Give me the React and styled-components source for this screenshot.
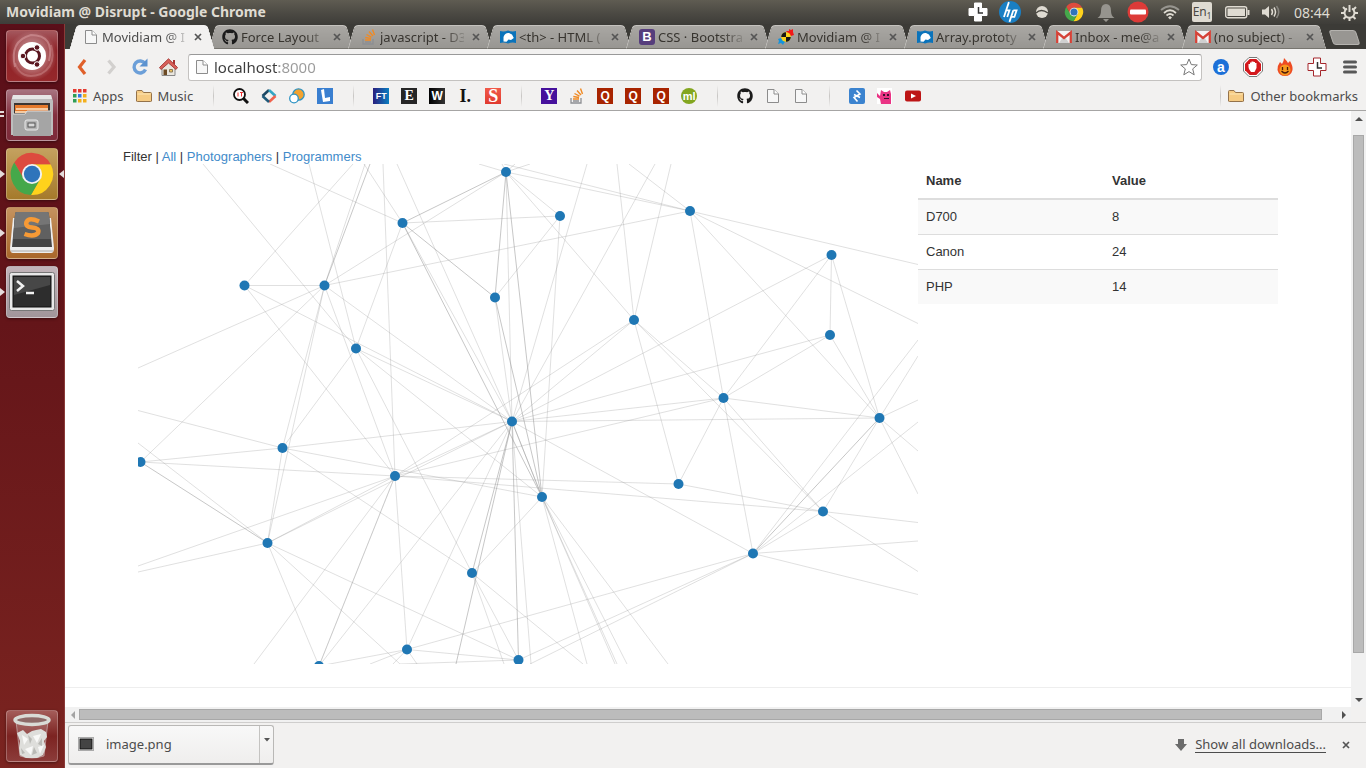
import React from "react";
import styled, { createGlobalStyle, css } from "styled-components";
import { FaGithub } from "react-icons/fa";

const uiFont = '"Noto Sans", "Open Sans", sans-serif';
const pageFont = '"Liberation Sans", Arial, sans-serif';

const GlobalStyle = createGlobalStyle`
  *, *::before, *::after { box-sizing: border-box; }
  body { margin: 0; background: #fff; }
  button { font: inherit; color: inherit; border: 0; padding: 0; background: none; }
  a { color: inherit; text-decoration: none; }
  svg { display: block; flex: none; }
`;

/* ---------- desktop shell ---------- */

const Desktop = styled.div`
  display: flex;
  flex-direction: column;
  min-height: 100vh;
  font-family: ${uiFont};
  font-size: 13px;
`;

const TopPanel = styled.header`
  display: flex;
  align-items: center;
  justify-content: space-between;
  height: 24px;
  padding: 0 6px;
  background: linear-gradient(#5f5c52, #4a4842 60%, #3e3d39);
  color: #dfdbd2;
  font-size: 14px;
`;

const WindowTitle = styled.h1`
  margin: 0;
  font-size: 14px;
  line-height: 24px;
  font-weight: 700;
`;

const Indicators = styled.div`
  display: flex;
  align-items: center;
`;

const Indicator = styled.button`
  display: flex;
  align-items: center;
  justify-content: center;
  width: ${(p) => p.$width || 32}px;
  height: 24px;
`;

const Language = styled.span`
  width: 20px;
  height: 20px;
  border-radius: 2px;
  background: #dfdbd2;
  color: #4a4842;
  font-size: 12px;
  line-height: 20px;
  sub {
    font-size: 8px;
    line-height: 8px;
  }
`;

const Workspace = styled.div`
  display: flex;
  flex: 1;
`;

const Launcher = styled.nav`
  display: flex;
  flex-direction: column;
  gap: 7px;
  flex: 0 0 65px;
  padding: 6px 0;
  border-right: 1px solid #8a3a38;
  background: linear-gradient(#5a0f19, #641519 40%, #7b2420);
`;

const LauncherItem = styled.button`
  position: relative;
  display: flex;
  align-items: center;
  justify-content: center;
  width: 52px;
  height: 52px;
  margin-left: 6px;
  border-radius: 4px;
  border: 1px solid rgba(255, 255, 255, 0.25);
  background: ${(p) => p.$tint};
  box-shadow: 0 1px 3px rgba(0, 0, 0, 0.4);
  ${(p) => p.$last && css`margin-top: auto;`}
  ${(p) =>
    p.$running &&
    css`
      &::before {
        content: "";
        position: absolute;
        left: -7px;
        top: 21px;
        border: 4px solid transparent;
        border-left: 5px solid #e4dcdc;
        border-right: 0;
      }
    `}
  ${(p) =>
    p.$pair &&
    css`
      &::before {
        content: "";
        position: absolute;
        left: -7px;
        top: 21px;
        width: 4px;
        height: 6px;
        border: solid #e4dcdc;
        border-width: 2px 0;
      }
    `}
  ${(p) =>
    p.$focused &&
    css`
      &::after {
        content: "";
        position: absolute;
        right: -7px;
        top: 21px;
        border: 4px solid transparent;
        border-right: 5px solid #e4dcdc;
        border-left: 0;
      }
    `}
`;

/* ---------- browser ---------- */

const Browser = styled.div`
  display: flex;
  flex-direction: column;
  flex: 1;
  min-width: 0;
  background: #f2f1f0;
`;

const TabStrip = styled.ul`
  display: flex;
  height: 25px;
  margin: 0;
  padding: 0 0 0 6px;
  list-style: none;
  background: #3c3b37;
`;

const Tab = styled.li`
  position: relative;
  display: flex;
  align-items: center;
  flex: 0 1 139px;
  min-width: 0;
  padding: 0 4px 0 12px;
  z-index: ${(p) => (p.$active ? 2 : 1)};
  color: ${(p) => (p.$active ? "#4c4c4c" : "#37342f")};
  &::before,
  &::after {
    content: "";
    position: absolute;
    z-index: -1;
    top: 1px;
    bottom: 0;
    width: 60%;
    border: 1px solid ${(p) => (p.$active ? "#f2f1f0" : "#c4c2be")};
    border-bottom-color: ${(p) => (p.$active ? "#f2f1f0" : "#77756f")};
    background: ${(p) => (p.$active ? "#f2f1f0" : "linear-gradient(#a9a7a3, #989692)")};
  }
  &::before {
    left: 2px;
    border-right: 0;
    border-radius: 4px 0 0 0;
    transform: skewX(-16deg);
  }
  &::after {
    right: -1px;
    border-left: 0;
    border-radius: 0 4px 0 0;
    transform: skewX(16deg);
  }
`;

const TabButton = styled.button`
  display: flex;
  align-items: center;
  gap: 3px;
  flex: 1;
  min-width: 0;
  text-align: left;
`;

const TabLabel = styled.span`
  flex: 1;
  min-width: 0;
  white-space: nowrap;
  line-height: 24px;
  mask-image: linear-gradient(to right, #000 76%, rgba(0, 0, 0, 0.2));
`;

const CloseButton = styled.button`
  display: flex;
  align-items: center;
  justify-content: center;
  flex: none;
  width: 16px;
  height: 16px;
  margin-left: 4px;
`;

const NewTab = styled.button`
  width: 27px;
  height: 15px;
  margin: 6px 0 0 9px;
  border: 1px solid #b5b3af;
  border-radius: 3px;
  background: #989692;
  transform: skewX(18deg);
`;

const Toolbar = styled.div`
  display: flex;
  align-items: center;
  height: 36px;
  padding: 0 0 0 2px;
`;

const ToolButton = styled.button`
  display: flex;
  align-items: center;
  justify-content: center;
  width: ${(p) => p.$width || 29}px;
  height: 24px;
`;

const Omnibox = styled.label`
  display: flex;
  align-items: center;
  flex: 1;
  height: 27px;
  margin: 0 3px 0 5px;
  padding: 0 3px 0 5px;
  gap: 4px;
  border: 1px solid #c4c2c0;
  border-top-color: #999;
  border-radius: 3px;
  background: #fff;
`;

const Address = styled.input`
  flex: 1;
  min-width: 0;
  padding: 0;
  border: 0;
  outline: 0;
  font: 15px/24px ${uiFont};
  color: #222;
  background: linear-gradient(to right, #3c3c3c 65px, #9a9a9a 65px);
  background-clip: text;
  -webkit-text-fill-color: transparent;
`;

const BookmarksBar = styled.nav`
  display: flex;
  align-items: center;
  gap: 12px;
  height: 26px;
  padding: 0 8px 4px 8px;
  border-bottom: 1px solid #a6a5a4;
  color: #4c4c4c;
`;

const Bookmark = styled.a`
  display: flex;
  align-items: center;
  gap: 6px;
  white-space: nowrap;
  margin-left: ${(p) => (p.$end ? "-12px" : "0")};
`;

const Divider = styled.span`
  width: 16px;
  height: 22px;
  background: linear-gradient(#f2f1f0, #c8c6c4, #f2f1f0) center / 1px 100% no-repeat;
  margin-left: ${(p) => (p.$end ? "auto" : "0")};
`;

const Badge = styled.span`
  flex: none;
  width: 16px;
  height: 16px;
  border-radius: ${(p) => p.$radius || 0}px;
  background: ${(p) => p.$bg};
  color: ${(p) => p.$fg || "#fff"};
  font: 700 ${(p) => p.$size || 13}px/16px ${(p) => p.$font || pageFont};
  text-align: center;
`;

const Viewport = styled.div`
  display: grid;
  grid-template-columns: 1fr 15px;
  grid-template-rows: 1fr 15px;
  flex: 1;
`;

const Page = styled.main`
  padding-top: 39px;
  background: #fff;
  color: #333;
  font: 13px/18px ${pageFont};
`;

const Filter = styled.nav`
  padding: 0 58px;
  line-height: 14px;
  a { color: #428bca; }
`;

const Columns = styled.div`
  display: grid;
  grid-template-columns: 780fr 360fr;
  align-items: start;
  padding: 0 73px;
`;

const Graph = styled.svg`
  width: 100%;
  height: auto;
  overflow: hidden;
`;

const DataTable = styled.table`
  width: 100%;
  border-collapse: collapse;
  table-layout: fixed;
  th, td {
    padding: 8px;
    text-align: left;
  }
  th:first-child { width: 186px; }
  th { border-bottom: 2px solid #ddd; }
  td { border-top: 1px solid #ddd; }
  tbody tr:nth-child(odd) { background: #f9f9f9; }
`;

const Rule = styled.hr`
  margin: 23px 0 0;
  border: 0;
  border-top: 1px solid #eee;
`;

const ScrollBar = styled.div`
  display: flex;
  flex-direction: ${(p) => (p.$vertical ? "column" : "row")};
  align-items: center;
  gap: ${(p) => (p.$vertical ? "12px" : "2px")};
  padding: ${(p) => (p.$vertical ? "4px 0 3px" : "0 3px 0 4px")};
  background: #f1f1f1;
`;

const ScrollThumb = styled.div`
  flex: 1;
  border: 1px solid #a8a8a8;
  background: #bcbcbc;
  ${(p) =>
    p.$vertical
      ? css`width: 11px; margin-bottom: 31px;`
      : css`height: 11px; margin-right: 16px;`}
`;

const DownloadShelf = styled.footer`
  display: flex;
  align-items: center;
  justify-content: space-between;
  height: 46px;
  padding: 0 12px 2px 3px;
  border-top: 1px solid #cfcecd;
  color: #4c4c4c;
`;

const DownloadItem = styled.div`
  display: flex;
  width: 206px;
  height: 40px;
  border: 1px solid #b9b8b6;
  border-bottom: 2px solid #999;
  border-radius: 3px;
  background: linear-gradient(#f8f8f8, #efeeed);
`;

const DownloadName = styled.button`
  display: flex;
  align-items: center;
  gap: 12px;
  flex: 1;
  padding-left: 9px;
  border-right: 1px solid #c4c3c1;
`;

const DownloadMenu = styled.button`
  display: flex;
  justify-content: center;
  width: 13px;
  padding-top: 12px;
`;

const ShelfActions = styled.div`
  display: flex;
  align-items: center;
  gap: 8px;
  a {
    border-bottom: 1px solid #4c4c4c;
    line-height: 16px;
  }
`;

/* ---------- icons ---------- */

const ChromeIcon = ({ size = 18 }) => (
  <svg width={size} height={size} viewBox="0 0 48 48">
    <path d="M5.5 12A22 22 0 0 1 43.6 14H24L15.3 29Z" fill="#dd4b3e" />
    <path d="M43.6 14A22 22 0 0 1 22.9 46L32.7 29 24 14Z" fill="#ffd21c" />
    <path d="M22.9 46A22 22 0 0 1 5.5 12L15.3 29H32.7Z" fill="#45a84a" />
    <circle cx="24" cy="24" r="10.5" fill="#f2f2f2" />
    <circle cx="24" cy="24" r="8.5" fill="#2f74bb" />
  </svg>
);

const PageIcon = () => (
  <svg width="16" height="16" viewBox="0 0 16 16">
    <path d="M2.500 1.500H9L13.500 6V14.500H2.500Z" fill="#f7f7f7" stroke="#8c8c8c" />
    <path d="M9 1.500V6H13.500" fill="#fff" stroke="#8c8c8c" />
  </svg>
);

const FolderIcon = () => (
  <svg width="16" height="16" viewBox="0 0 16 16">
    <path d="M.5 13V3.500Q.5 2.500 1.500 2.500H6L7.500 4.500H14.500Q15.500 4.500 15.500 5.500V13Q15.500 13.500 14.500 13.500H1.500Q.5 13.500.5 13Z" fill="#f6cb83" stroke="#94724a" />
    <path d="M1.500 6H14.500" stroke="#fde6b5" />
  </svg>
);

const CloseIcon = () => (
  <svg width="8" height="8" viewBox="0 0 8 8">
    <path d="M1 1 7 7M7 1 1 7" stroke="#555" strokeWidth="1.700" />
  </svg>
);

const GmailIcon = () => (
  <svg width="16" height="16" viewBox="0 0 16 16">
    <rect y="2" width="16" height="12" rx="1" fill="#f3f3f3" />
    <path d="M3 14 7 8H9L13 14Z" fill="#d0d0d0" />
    <path d="M1.200 14V3.500L8 9 14.800 3.500V14" fill="none" stroke="#d54237" strokeWidth="2.300" />
  </svg>
);

const MdnIcon = () => (
  <svg width="16" height="16" viewBox="0 0 16 16">
    <path d="M0 2Q4 3 8 1.500 12 3 16 2V14Q12 13 8 14.500 4 13 0 14Z" fill="#0a73bb" />
    <path d="M3.500 12.500 3.500 8Q5 3.500 9 4L12 5.500 13.800 9 11 11 8.500 10.500 6.500 12.800Z" fill="#fff" />
  </svg>
);

const MovidiamIcon = () => (
  <svg width="16" height="16" viewBox="0 0 16 16">
    <path d="M8 2H11V0L13 1 15 0V3L16 6 13 7 11 6Z" fill="#f11818" />
    <path d="M0 10 3 9 5 11 8 12 6 14 5 16 3 14 0 15 1 12Z" fill="#1493dc" />
    <circle cx="8" cy="8" r="4.800" fill="#f8d11c" />
    <path d="M8 8V3.200A4.800 4.800 0 0 0 3.200 8ZM8 8V12.800A4.800 4.800 0 0 0 12.800 8Z" fill="#171717" />
  </svg>
);

const StackIcon = () => (
  <svg width="16" height="16" viewBox="0 0 16 16" fill="none">
    <path d="M2 10V15H12V10M4 13H10" stroke="#8d8f92" strokeWidth="1.300" />
    <path d="M4 11H10M4.300 8.500 10 9.500M5.500 5.500 10.500 8.200M8 2.500 12 7M11.500.5 13.500 6" stroke="#f08a24" strokeWidth="1.400" />
  </svg>
);

const ArrowIcon = ({ dir, fill = "#505050" }) => {
  const shapes = {
    up: "M0 6 4 2 8 6Z",
    down: "M0 2 4 6 8 2Z",
    left: "M6 0 2 4 6 8Z",
    right: "M2 0 6 4 2 8Z",
  };
  return (
    <svg width="8" height="8" viewBox="0 0 8 8">
      <path d={shapes[dir]} fill={fill} />
    </svg>
  );
};

const ClockCross = ({ fill = "#fff", stroke = "#fff", hand = "#333" }) => (
  <svg width="20" height="20" viewBox="0 0 20 20">
    <path d="M6.500 1H13.500V6.500H19V13.500H13.500V19H6.500V13.500H1V6.500H6.500Z" fill={fill} stroke={stroke} />
    <path d="M10.500 5V11H15" fill="none" stroke={hand} strokeWidth="1.500" />
  </svg>
);

/* ---------- launcher artwork ---------- */

const UbuntuArt = () => (
  <svg width="50" height="50" viewBox="0 0 50 50">
    <defs>
      <radialGradient id="swirl">
        <stop offset="0.500" stopColor="#fff" stopOpacity="0.350" />
        <stop offset="1" stopColor="#fff" stopOpacity="0" />
      </radialGradient>
    </defs>
    <circle cx="25" cy="25" r="25" fill="url(#swirl)" />
    <path d="M8 36Q2 10 24 4 48 4 42 30" fill="none" stroke="#d69a9c" strokeOpacity=".6" strokeWidth="2" />
    <path d="M44 14Q50 34 34 43 14 50 8 32" fill="none" stroke="#d69a9c" strokeOpacity=".4" strokeWidth="2" />
    <circle cx="25" cy="25" r="14" fill="#fff" />
    <circle cx="25.500" cy="25" r="7" fill="none" stroke="#5a1620" strokeWidth="3" />
    <g fill="#5a1620" stroke="#fff" strokeWidth="1">
      <circle cx="16" cy="25" r="2.800" />
      <circle cx="30" cy="16.500" r="2.800" />
      <circle cx="30" cy="33.500" r="2.800" />
    </g>
  </svg>
);

const FilesArt = () => (
  <svg width="44" height="46" viewBox="0 0 44 46">
    <path d="M3 3H41L43 9V43H1V9Z" fill="#bdbdbd" />
    <path d="M3 3H41L42 7H2Z" fill="#e6e6e6" />
    <rect x="4" y="11" width="36" height="12" fill="#3c3632" />
    <rect x="5" y="13" width="33" height="8" fill="#e57a2c" />
    <path d="M6 17H38M5 20H39" stroke="#fbe6c8" strokeWidth="1.500" />
    <path d="M3 22H15L17 19H41V44H3Z" fill="#a5a5a5" />
    <path d="M3 22H15L17 19H41" fill="none" stroke="#dedede" />
    <rect x="15" y="28" width="13" height="10" rx="2" fill="#b5b5b5" stroke="#e8e8e8" />
    <rect x="18" y="31" width="7" height="4" fill="#d8d8d8" stroke="#555" />
  </svg>
);

const SublimeArt = () => (
  <svg width="46" height="46" viewBox="0 0 46 46">
    <path d="M4 8 1 38Q1 43 4 43H42Q45 43 45 38L42 8Z" fill="#ededed" />
    <path d="M2 41H44" stroke="#aaa" />
    <path d="M6 5Q6 2 8 2H38Q40 2 40 5L43 37H3Z" fill="#444" />
    <path d="M6 5Q6 2 8 2H38Q40 2 40 5L42 29H4Z" fill="#606060" />
    <path d="M6 5Q6 2 8 2H38Q40 2 40 5L41 14 5 18Z" fill="#757575" />
    <path d="M30 11.500Q20 7 17.500 12 16 17 23 17.500 31 18 29 23 25 27.500 15.500 24" fill="none" stroke="#f79a35" strokeWidth="4.500" />
  </svg>
);

const TerminalArt = () => (
  <svg width="46" height="40" viewBox="0 0 46 40">
    <rect x=".5" y=".5" width="45" height="38" rx="2" fill="#e8e8e8" stroke="#777" />
    <rect x="4" y="4" width="38" height="31" fill="#2d2d2d" stroke="#111" />
    <path d="M5 5H41V13L5 23Z" fill="#474747" />
    <path d="M8 9 14 14 8 19M17 21H25" fill="none" stroke="#f2f2f2" strokeWidth="2.500" />
  </svg>
);

const TrashArt = () => (
  <svg width="42" height="48" viewBox="0 0 42 48">
    <path d="M5 9 9 44Q21 48 33 44L37 9Z" fill="#fff" fillOpacity=".18" stroke="#ddd" strokeOpacity=".5" />
    <path d="M6 21 12 18 16 22 21 19 25 18 30 17 35 20 36 25 33 29 35 35 32 43 26 46H15L9 43 8 36 9 29Z" fill="#dededb" />
    <path d="M11 23 17 27 13 33ZM22 24 30 22 26 31ZM14 37 22 34 20 43ZM27 35 33 33 29 42Z" fill="#f8f8f7" />
    <path d="M17 23 21 27 19 32ZM31 26 27 32 31 34ZM10 36 14 41 11 42ZM23 35 26 41 21 43Z" fill="#b9b9b5" />
    <ellipse cx="21" cy="8" rx="17" ry="4.500" fill="#8e6a68" stroke="#d9dbd6" strokeWidth="3.500" />
  </svg>
);

/* ---------- graph data ---------- */

const nodes = {
  A: [368, 8], B: [264.5, 59], C: [422, 52], D: [552, 47], E: [693.5, 91],
  F: [106.5, 121.5], G: [186.5, 121.5], H: [357, 133.5], I: [496, 156], J: [692, 171],
  K: [218, 184.5], L: [585.5, 234], M: [374, 257.5], N: [741.5, 254], O: [144.5, 284],
  P: [2.5, 298], Q: [257, 312], R: [540.5, 320], S: [404, 333], T: [685, 347.5],
  U: [129.5, 379], V: [615, 389.5], W: [334, 409], X: [269, 485.5], Y: [380.5, 496], Z: [181, 502],
};

const links =
  "AG AM AC AI AD BC BK BM GD GF GM GO GU GP GQ FM FQ KM KO KS KW HC HM CS IR IM IQ IL IT " +
  "EM EL EJ EN JM JL JN LM LQ LN LR LT LV DL DN NM NT TV TR TQ VM VX VY OM OS OP OU OW QM QU QR QP QX QZ QZ " +
  "MU MX MZ MS SW UZ UY WY XZ XY";

const strongLinks = "AB AH AS BH BS HS MW MS MY NV PU";

/* links whose far end lies outside the canvas: node, x, y, strong */
const outgoing = [
  ["K", 65, 0], ["B", 132, 0], ["K", 171, 0], ["F", 215, 0], ["G", 227, 0], ["G", 232, 0, 1], ["B", 226, 0],
  ["Q", 245, 0], ["M", 259, 0], ["A", 341, 0], ["A", 364, 0], ["D", 366, 0], ["A", 377, 0], ["A", 392, 0],
  ["M", 449, 0], ["I", 479, 0], ["M", 517, 0], ["I", 533, 0], ["D", 491, 0], ["D", 780, 100.5], ["D", 780, 159.5],
  ["V", 780, 176], ["N", 780, 192], ["N", 780, 236], ["V", 780, 258], ["N", 780, 287], ["N", 780, 330],
  ["T", 780, 358.5], ["V", 780, 377], ["T", 780, 407.5], ["V", 780, 430.5], ["V", 392, 500],
  ["G", 0, 204], ["O", 0, 246.5], ["U", 0, 279], ["Q", 0, 402], ["U", 0, 408], ["Q", 116, 500],
  ["U", 262, 500], ["Y", 262, 500], ["M", 318, 500, 1], ["M", 393, 500], ["W", 366, 500], ["W", 445, 500],
  ["S", 449, 500], ["S", 477, 500], ["S", 479, 500], ["S", 489, 500], ["S", 530, 500],
  ["X", 232, 500], ["X", 255, 500], ["X", 279, 500],
];

const pairs = (list) => list.split(" ").map(([from, to]) => [nodes[from], nodes[to]]);

const segments = [
  ...pairs(links).map(([a, b]) => [a, b, false]),
  ...pairs(strongLinks).map(([a, b]) => [a, b, true]),
  ...outgoing.map(([from, x, y, strong]) => [nodes[from], [x, y], Boolean(strong)]),
];

const rows = [
  ["D700", 8],
  ["Canon", 24],
  ["PHP", 14],
];

const tabs = [
  { label: "Movidiam @ I", icon: <PageIcon />, active: true },
  { label: "Force Layout", icon: <FaGithub size={16} color="#1b1b1b" /> },
  { label: "javascript - D3", icon: <StackIcon /> },
  { label: "<th> - HTML (", icon: <MdnIcon /> },
  { label: "CSS · Bootstra", icon: <Badge $bg="#563d7c" $radius={3}>B</Badge> },
  { label: "Movidiam @ I", icon: <MovidiamIcon /> },
  { label: "Array.prototy", icon: <MdnIcon /> },
  { label: "Inbox - me@a", icon: <GmailIcon /> },
  { label: "(no subject) -", icon: <GmailIcon /> },
];

const serif = '"Liberation Serif", serif';

const favicons = [
  null,
  ["IT search", <svg width="16" height="16" viewBox="0 0 16 16"><circle cx="6.500" cy="6.500" r="5.500" fill="#fff" stroke="#111" strokeWidth="1.800" /><path d="M10.500 10.500 15 15" stroke="#111" strokeWidth="3" /><path d="M5 4.500V8.500M7 4.500H10M8.500 4.500V8.500" stroke="#e33" /></svg>],
  ["Diamond", <svg width="16" height="16" viewBox="0 0 16 16" fill="none" strokeWidth="2.600"><path d="M1.500 8 8 2" stroke="#1b4763" /><path d="M8 2 14.500 8" stroke="#33a5c4" /><path d="M14.500 8 8 14" stroke="#f0624d" /><path d="M8 14 1.500 8" stroke="#1f5a7a" /></svg>],
  ["Circles", <svg width="16" height="16" viewBox="0 0 16 16"><circle cx="9.500" cy="6.500" r="5.700" fill="#f4a32f" stroke="#2f94c4" strokeWidth="1.300" /><circle cx="5" cy="10.500" r="4.300" fill="#fff" stroke="#2f94c4" strokeWidth="1.300" /></svg>],
  ["Lanyrd", <svg width="16" height="16" viewBox="0 0 16 16"><rect width="16" height="16" fill="#3a7fd0" /><path d="M4 2 7 1 8 10 13 9V13L6 14Z" fill="#fff" /></svg>],
  null,
  ["FT Labs", <Badge $bg="linear-gradient(90deg,#2a1f7e,#0b7ec0)" $size={9}>FT</Badge>],
  ["Editorial", <Badge $bg="#262626" $font={serif} $size={14}>E</Badge>],
  ["Wired", <Badge $bg="linear-gradient(90deg,#000,#333)" $size={12}>W</Badge>],
  ["Instapaper", <Badge $bg="transparent" $fg="#111" $font={serif} $size={18}>I.</Badge>],
  ["Smashing Magazine", <Badge $bg="linear-gradient(#f15a4a,#e03a2f)" $font={serif} $size={18}>S</Badge>],
  null,
  ["Hacker News", <Badge $bg="#46119c" $font={serif} $size={14}>Y</Badge>],
  ["Stack Overflow", <StackIcon />],
  ["Quora", <Badge $bg="#a82400" $size={12}>Q</Badge>],
  ["Quora feed", <Badge $bg="#a82400" $size={12}>Q</Badge>],
  ["Quora topics", <Badge $bg="#a82400" $size={12}>Q</Badge>],
  ["ML", <Badge $bg="#83a61f" $radius={8} $size={11}>ml</Badge>],
  null,
  ["GitHub", <FaGithub size={16} color="#1b1b1b" />],
  ["Page one", <PageIcon />],
  ["Page two", <PageIcon />],
  null,
  ["Zerply", <svg width="16" height="16" viewBox="0 0 16 16"><rect width="16" height="16" rx="2" fill="#3b83cf" /><path d="M7.500 2.500 11 6 5 9.500 8.500 13.500M5 6.500 11 9.500" fill="none" stroke="#fff" strokeWidth="1.600" /></svg>],
  ["Monster", <svg width="16" height="16" viewBox="0 0 16 16"><rect width="15" height="16" fill="#fff" /><path d="M0 5 3 8 4 2 7 4H10L13 2 14 6V16H4L3 11 0 9Z" fill="#ea3384" /><path d="M6 6H8V8H6ZM10 6H12V8H10ZM7 10H12V11H7Z" fill="#3a1230" /></svg>],
  ["YouTube", <svg width="16" height="16" viewBox="0 0 16 16"><rect y="2.500" width="16" height="11" rx="2" fill="#bd1515" /><path d="M6 5.500V10.500L11 8Z" fill="#fff" /></svg>],
];

/* ---------- sections ---------- */

const StatusArea = () => (
  <Indicators>
    <Indicator aria-label="Time tracker"><ClockCross /></Indicator>
    <Indicator aria-label="HP">
      <svg width="22" height="22" viewBox="0 0 20 20">
        <circle cx="10" cy="10" r="10" fill="#1a7fc4" />
        <path d="M9 1 4.500 14.500M6.500 8.500H9.500L7.500 14.500M13 8.500 9.500 19M13 8.500H16L14 14.500H11" fill="none" stroke="#fff" strokeWidth="1.600" />
      </svg>
    </Indicator>
    <Indicator aria-label="Status">
      <svg width="14" height="14" viewBox="0 0 14 14"><circle cx="7" cy="7" r="6" fill="#dfdbd2" /><path d="M1 8Q6 3 13 8" fill="none" stroke="#4a4842" strokeWidth="1.500" /></svg>
    </Indicator>
    <Indicator aria-label="Chrome"><ChromeIcon size={20} /></Indicator>
    <Indicator aria-label="Notifications">
      <svg width="18" height="19" viewBox="0 0 18 19"><path d="M9 1Q14 1 14 8 14 13 17.500 15H.5Q4 13 4 8 4 1 9 1ZM6 16H12L9 19Z" fill="#96948e" /></svg>
    </Indicator>
    <Indicator aria-label="Do not disturb">
      <svg width="22" height="22" viewBox="0 0 22 22"><circle cx="11" cy="11" r="10.500" fill="#dd3b38" /><rect x="3" y="8.500" width="16" height="5" rx="1" fill="#fff" /></svg>
    </Indicator>
    <Indicator aria-label="Wireless">
      <svg width="20" height="16" viewBox="0 0 20 16" fill="none" strokeWidth="1.700"><path d="M1 6Q10-1.500 19 6" stroke="#97958f" /><path d="M4 9Q10 3.500 16 9" stroke="#dfdbd2" /><path d="M6.500 11.500Q10 8.500 13.500 11.500" stroke="#dfdbd2" /><path d="M8 13.500 10 15.500 12 13.500 10 12Z" fill="#dfdbd2" /></svg>
    </Indicator>
    <Indicator aria-label="Keyboard layout"><Language>En<sub>1</sub></Language></Indicator>
    <Indicator aria-label="Battery" $width={38}>
      <svg width="25" height="13" viewBox="0 0 25 13"><rect x=".7" y=".7" width="21" height="11" rx="2" fill="none" stroke="#dfdbd2" strokeWidth="1.400" /><rect x="2.500" y="2.500" width="17.500" height="7.500" fill="#dfdbd2" /><path d="M23.500 4V9" stroke="#dfdbd2" strokeWidth="2" /></svg>
    </Indicator>
    <Indicator aria-label="Volume" $width={30}>
      <svg width="20" height="16" viewBox="0 0 20 16" fill="none" stroke="#dfdbd2" strokeWidth="1.500"><path d="M1 5.500H4L8 2V14L4 10.500H1Z" fill="#dfdbd2" stroke="none" /><path d="M10.500 5Q12.500 8 10.500 11M13 3.500Q16 8 13 12.500" /><path d="M15.500 2Q20 8 15.500 14" stroke="#85837d" /></svg>
    </Indicator>
    <Indicator $width={52}>08:44</Indicator>
    <Indicator aria-label="Session" $width={22}>
      <svg width="17" height="17" viewBox="0 0 17 17" fill="none" stroke="#dfdbd2" strokeWidth="2"><path d="M6 4.500A5 5 0 1 0 11 4.500" /><path d="M8.500 1V8" /><path d="M2 3 4.500 5.500M15 3 12.500 5.500M0 9H3M17 9H14M2.500 15 5 12.500M14.500 15 12 12.500M8.500 17V14" /></svg>
    </Indicator>
  </Indicators>
);

const NetworkGraph = () => (
  <Graph viewBox="0 0 780 500" role="img" aria-label="Force layout graph">
    <g stroke="#999">
      {segments.map(([a, b, strong], i) => (
        <line key={i} x1={a[0]} y1={a[1]} x2={b[0]} y2={b[1]} strokeOpacity={strong ? 0.55 : 0.3} />
      ))}
    </g>
    <g fill="#1f77b4">
      {Object.entries(nodes).map(([id, [x, y]]) => (
        <circle key={id} cx={x} cy={y} r="5" />
      ))}
    </g>
  </Graph>
);

export default function App() {
  return (
    <Desktop>
      <GlobalStyle />
      <TopPanel>
        <WindowTitle>Movidiam @ Disrupt - Google Chrome</WindowTitle>
        <StatusArea />
      </TopPanel>
      <Workspace>
        <Launcher aria-label="Launcher">
          <LauncherItem aria-label="Dash" $tint="linear-gradient(#a4575d,#8e2126 40%,#96282b)"><UbuntuArt /></LauncherItem>
          <LauncherItem aria-label="Files" $pair $tint="linear-gradient(#a77480,#84303f 50%,#7d2b3a)"><FilesArt /></LauncherItem>
          <LauncherItem aria-label="Google Chrome" $running $focused $tint="linear-gradient(#c4a15f,#a57a2b)"><ChromeIcon size={46} /></LauncherItem>
          <LauncherItem aria-label="Sublime Text" $running $tint="linear-gradient(#c5935f,#a9672b)"><SublimeArt /></LauncherItem>
          <LauncherItem aria-label="Terminal" $running $tint="linear-gradient(#c2b5ba,#a1959a)"><TerminalArt /></LauncherItem>
          <LauncherItem aria-label="Trash" $last $tint="linear-gradient(#a45c59,#7c2321 50%,#8c3c3a)"><TrashArt /></LauncherItem>
        </Launcher>
        <Browser>
          <TabStrip>
            {tabs.map((tab, i) => (
              <Tab key={i} $active={tab.active}>
                <TabButton>
                  {tab.icon}
                  <TabLabel>{tab.label}</TabLabel>
                </TabButton>
                <CloseButton aria-label="Close tab"><CloseIcon /></CloseButton>
              </Tab>
            ))}
            <li><NewTab aria-label="New tab" /></li>
          </TabStrip>
          <Toolbar>
            <ToolButton aria-label="Back">
              <svg width="12" height="18" viewBox="0 0 12 18"><path d="M9 2 3.500 9 9 16" fill="none" stroke="#e0602a" strokeWidth="3.200" /></svg>
            </ToolButton>
            <ToolButton aria-label="Forward">
              <svg width="12" height="18" viewBox="0 0 12 18"><path d="M3.500 2.500 9 9 3.500 15.500" fill="none" stroke="#d2d0ce" strokeWidth="3.200" /></svg>
            </ToolButton>
            <ToolButton aria-label="Reload">
              <svg width="18" height="18" viewBox="0 0 18 18"><path d="M14 5.500A6 6 0 1 0 14.500 11.500" fill="none" stroke="#6c9fd8" strokeWidth="3.400" /><path d="M16.500.5V8.500H8.500Z" fill="#5c92cf" /></svg>
            </ToolButton>
            <ToolButton aria-label="Home">
              <svg width="19" height="19" viewBox="0 0 19 19"><path d="M14 2H16V8H14Z" fill="#a33" /><path d="M3 9V17.500H16V9L9.500 3Z" fill="#e9e6df" stroke="#888" /><path d="M4.500 11.500H8V17H4.500Z" fill="#6c4a24" /><path d="M10.500 11.500H13.500V14H10.500Z" fill="#f0c25a" stroke="#8a7a58" /><path d="M.5 9.500 9.500.8 18.500 9.500 17 11.500 9.500 5 2 11.500Z" fill="#d9605a" stroke="#a8403c" /></svg>
            </ToolButton>
            <Omnibox>
              <PageIcon />
              <Address aria-label="Address" defaultValue="localhost:8000" />
              <svg width="18" height="18" viewBox="0 0 18 18"><path d="M9 1 11.300 6.600 17.300 7 12.700 10.900 14.200 16.800 9 13.600 3.800 16.800 5.300 10.900.7 7 6.700 6.600Z" fill="#fff" stroke="#777" /></svg>
            </Omnibox>
            <ToolButton aria-label="Extension A" $width={32}><Badge $bg="#1c70d8" $radius={8} $size={14}>a</Badge></ToolButton>
            <ToolButton aria-label="Ad blocker" $width={32}>
              <svg width="20" height="20" viewBox="0 0 20 20"><path d="M6 .5H14L19.500 6V14L14 19.500H6L.5 14V6Z" fill="#fff" stroke="#777" /><path d="M6.700 2H13.300L18 6.700V13.300L13.300 18H6.700L2 13.300V6.700Z" fill="#d3181c" /><path d="M5.500 10V7H7V5.500H8.500V4.500H10.500V5H12V6H13.500V11L11.500 15H8L6 12Z" fill="#fff" /></svg>
            </ToolButton>
            <ToolButton aria-label="Flame" $width={32}>
              <svg width="16" height="18" viewBox="0 0 16 18"><path d="M7 0Q10 3 11 5L13 3Q16 8 15.500 12 14 18 8 18 2 18 .5 12 0 8 3 4L5 6Q7 3 7 0Z" fill="#ee4b22" /><circle cx="8" cy="12" r="5.500" fill="#f7981d" /><path d="M5.500 9V12M10.500 9V12M4.500 13Q8 17 11.500 13" fill="none" stroke="#4b1a08" strokeWidth="1.300" /></svg>
            </ToolButton>
            <ToolButton aria-label="Timer" $width={32}><ClockCross stroke="#a5272c" /></ToolButton>
            <ToolButton aria-label="Menu" $width={33}>
              <svg width="14" height="14" viewBox="0 0 14 14"><path d="M1.500 2H12.500M1.500 7H12.500M1.500 12H12.500" stroke="#585858" strokeWidth="3" strokeLinecap="round" /></svg>
            </ToolButton>
          </Toolbar>
          <BookmarksBar aria-label="Bookmarks">
            <Bookmark href="#apps">
              <svg width="14" height="14" viewBox="0 0 14 14">
                {["#e5392f", "#e5392f", "#e5392f", "#2f9e55", "#3578e5", "#f3b01c", "#2f9e55", "#f3b01c", "#f3b01c"].map((fill, i) => (
                  <rect key={i} x={(i % 3) * 5} y={Math.floor(i / 3) * 5} width="3.500" height="3.500" fill={fill} />
                ))}
              </svg>
              Apps
            </Bookmark>
            <Bookmark href="#music"><FolderIcon />Music</Bookmark>
            {favicons.map((item, i) =>
              item ? <Bookmark key={i} href="#bookmark" aria-label={item[0]}>{item[1]}</Bookmark> : <Divider key={i} />
            )}
            <Divider $end />
            <Bookmark href="#other" $end><FolderIcon />Other bookmarks</Bookmark>
          </BookmarksBar>
          <Viewport>
            <Page>
              <Filter>
                Filter | <a href="#all">All</a> | <a href="#photographers">Photographers</a> | <a href="#programmers">Programmers</a>
              </Filter>
              <Columns>
                <NetworkGraph />
                <DataTable>
                  <thead>
                    <tr><th scope="col">Name</th><th scope="col">Value</th></tr>
                  </thead>
                  <tbody>
                    {rows.map(([name, value]) => (
                      <tr key={name}><td>{name}</td><td>{value}</td></tr>
                    ))}
                  </tbody>
                </DataTable>
              </Columns>
              <Rule />
            </Page>
            <ScrollBar $vertical>
              <ArrowIcon dir="up" />
              <ScrollThumb $vertical />
              <ArrowIcon dir="down" />
            </ScrollBar>
            <ScrollBar>
              <ArrowIcon dir="left" fill="#a3a3a3" />
              <ScrollThumb />
              <ArrowIcon dir="right" />
            </ScrollBar>
          </Viewport>
          <DownloadShelf>
            <DownloadItem>
              <DownloadName>
                <svg width="16" height="14" viewBox="0 0 16 14"><rect x=".5" y=".5" width="15" height="13" fill="#fff" stroke="#aaa" /><rect x="2" y="2" width="12" height="10" fill="#444" stroke="#111" /></svg>
                image.png
              </DownloadName>
              <DownloadMenu aria-label="Download options">
                <svg width="6" height="4" viewBox="0 0 6 4"><path d="M0 0H6L3 3.500Z" fill="#555" /></svg>
              </DownloadMenu>
            </DownloadItem>
            <ShelfActions>
              <svg width="12" height="12" viewBox="0 0 12 12"><path d="M3 0H9V5H12L6 12 0 5H3Z" fill="#6b6b6b" /></svg>
              <a href="#downloads">Show all downloads...</a>
              <CloseButton aria-label="Close downloads"><CloseIcon /></CloseButton>
            </ShelfActions>
          </DownloadShelf>
        </Browser>
      </Workspace>
    </Desktop>
  );
}
